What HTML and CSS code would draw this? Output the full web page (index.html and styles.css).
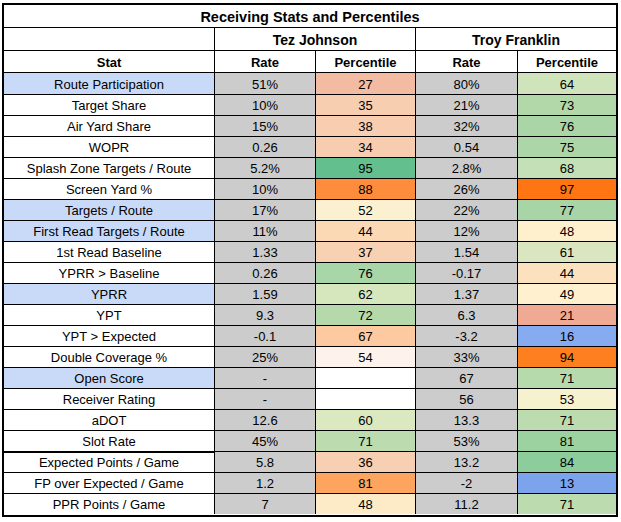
FILE: index.html
```html
<!DOCTYPE html>
<html>
<head>
<meta charset="utf-8">
<link rel="stylesheet" href="styles.css">
</head>
<body>
<div class="sheet">
  <div class="c title span5">Receiving Stats and Percentiles</div>
  <div class="c b"></div>
  <div class="c b name span2">Tez Johnson</div>
  <div class="c b name span2 last">Troy Franklin</div>
  <div class="c b">Stat</div>
  <div class="c b">Rate</div>
  <div class="c b">Percentile</div>
  <div class="c b">Rate</div>
  <div class="c b last">Percentile</div>

  <div class="c hl first">Route Participation</div><div class="c g first">51%</div><div class="c first" style="background:#f4bba3">27</div><div class="c g first">80%</div><div class="c last first" style="background:#cfe4bb">64</div>
  <div class="c">Target Share</div><div class="c g">10%</div><div class="c" style="background:#f8ceb0">35</div><div class="c g">21%</div><div class="c last" style="background:#b2d8a9">73</div>
  <div class="c">Air Yard Share</div><div class="c g">15%</div><div class="c" style="background:#f8cdb0">38</div><div class="c g">32%</div><div class="c last" style="background:#a9d5a7">76</div>
  <div class="c">WOPR</div><div class="c g">0.26</div><div class="c" style="background:#f8ccaf">34</div><div class="c g">0.54</div><div class="c last" style="background:#acd6a8">75</div>
  <div class="c">Splash Zone Targets / Route</div><div class="c g">5.2%</div><div class="c" style="background:#63c08e">95</div><div class="c g">2.8%</div><div class="c last" style="background:#c4e0b6">68</div>
  <div class="c">Screen Yard %</div><div class="c g">10%</div><div class="c" style="background:#fd8c3c">88</div><div class="c g">26%</div><div class="c last" style="background:#ff7514">97</div>
  <div class="c hl">Targets / Route</div><div class="c g">17%</div><div class="c" style="background:#fbf1d0">52</div><div class="c g">22%</div><div class="c last" style="background:#a8d5a6">77</div>
  <div class="c hl">First Read Targets / Route</div><div class="c g">11%</div><div class="c" style="background:#fbd9b5">44</div><div class="c g">12%</div><div class="c last" style="background:#feefcd">48</div>
  <div class="c">1st Read Baseline</div><div class="c g">1.33</div><div class="c" style="background:#f8d0b2">37</div><div class="c g">1.54</div><div class="c last" style="background:#d9e6c0">61</div>
  <div class="c">YPRR &gt; Baseline</div><div class="c g">0.26</div><div class="c" style="background:#a9d6a9">76</div><div class="c g">-0.17</div><div class="c last" style="background:#fbe1bd">44</div>
  <div class="c hl">YPRR</div><div class="c g">1.59</div><div class="c" style="background:#d6e6bd">62</div><div class="c g">1.37</div><div class="c last" style="background:#fff1d0">49</div>
  <div class="c">YPT</div><div class="c g">9.3</div><div class="c" style="background:#b5d9aa">72</div><div class="c g">6.3</div><div class="c last" style="background:#f0aa94">21</div>
  <div class="c">YPT &gt; Expected</div><div class="c g">-0.1</div><div class="c" style="background:#fdc9a0">67</div><div class="c g">-3.2</div><div class="c last" style="background:#86abf0">16</div>
  <div class="c">Double Coverage %</div><div class="c g">25%</div><div class="c" style="background:#fef3ec">54</div><div class="c g">33%</div><div class="c last" style="background:#fe7f1f">94</div>
  <div class="c hl">Open Score</div><div class="c g">-</div><div class="c"></div><div class="c g">67</div><div class="c last" style="background:#b7daad">71</div>
  <div class="c">Receiver Rating</div><div class="c g">-</div><div class="c"></div><div class="c g">56</div><div class="c last" style="background:#f6f1cf">53</div>
  <div class="c">aDOT</div><div class="c g">12.6</div><div class="c" style="background:#dce8c0">60</div><div class="c g">13.3</div><div class="c last" style="background:#bcdcb0">71</div>
  <div class="c thick">Slot Rate</div><div class="c g thick">45%</div><div class="c thick" style="background:#bcdcb0">71</div><div class="c g thick">53%</div><div class="c last thick" style="background:#9bd2a0">81</div>
  <div class="c">Expected Points / Game</div><div class="c g">5.8</div><div class="c" style="background:#f7cfb2">36</div><div class="c g">13.2</div><div class="c last" style="background:#8ccd9b">84</div>
  <div class="c">FP over Expected / Game</div><div class="c g">1.2</div><div class="c" style="background:#fda55f">81</div><div class="c g">-2</div><div class="c last" style="background:#7ba4ec">13</div>
  <div class="c end">PPR Points / Game</div><div class="c g end">7</div><div class="c end" style="background:#fdebc8">48</div><div class="c g end">11.2</div><div class="c last end" style="background:#bcdcb0">71</div>
</div>
</body>
</html>
```

FILE: styles.css
```css
html, body {
  margin: 0;
  padding: 0;
  background: #ffffff;
}
body {
  padding: 3px 0 0 2px;
}
.sheet {
  width: 612px;
  border: 2px solid #000;
  display: grid;
  grid-template-columns: 211px 101px 100px 102px 98px;
  grid-auto-rows: 21px;
  grid-template-rows: 23px 23px 22px 22px;
  font-family: "Liberation Sans", Arial, sans-serif;
  font-size: 13px;
  color: #000;
}
.c {
  box-sizing: border-box;
  border-right: 1px solid #000;
  border-bottom: 1px solid #000;
  display: flex;
  align-items: center;
  justify-content: center;
  white-space: nowrap;
  padding-top: 1px;
}
.last {
  border-right: none;
}
.span5 {
  grid-column: span 5;
  border-right: none;
}
.span2 {
  grid-column: span 2;
}
.b, .title {
  font-weight: bold;
}
.title {
  font-size: 14.5px;
}
.name {
  font-size: 14px;
}
.hl {
  background: #c9daf8;
}
.g {
  background: #cccccc;
}
.thick {
  border-bottom: 2px solid #000;
  height: 22px;
}
.end {
  border-bottom: none;
  height: 20px;
}
```
